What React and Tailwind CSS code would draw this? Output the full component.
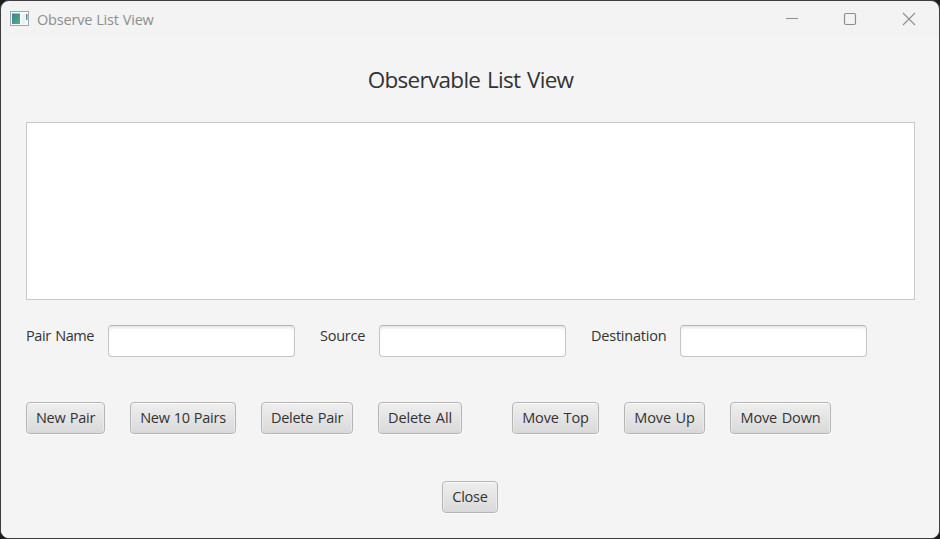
import React from "react";

function Field({ label, labelClass }) {
  return (
    <label className="flex">
      <span className={`${labelClass} whitespace-nowrap leading-[20px] pt-px`}>{label}</span>
      <input
        className="h-8 w-[187px] rounded-[4px] border border-[#c6c6c6] border-t-[#b5b5b5] bg-white px-2 outline-none shadow-[inset_0_3px_3px_-1px_#e6e6e6]"
      />
    </label>
  );
}

function Button({ children, className }) {
  return (
    <button
      className={`${className} flex h-8 items-center justify-center whitespace-nowrap rounded-[4px] border border-[#b5b5b5] bg-linear-to-b from-[#efefef] to-[#d9d9d9] pb-px shadow-[inset_0_1px_0_#fafafa,inset_1px_0_0_#ebebeb,inset_-1px_0_0_#ebebeb,0_1px_0_#fafafa]`}
    >
      {children}
    </button>
  );
}

function TitleBar() {
  return (
    <header className="flex h-9 shrink-0 items-center justify-between text-[#8e8e8e]">
      <div className="flex items-center">
        <svg className="ml-[9px] mr-[7px]" width="20" height="16" viewBox="0 0 20 16">
          <defs>
            <linearGradient id="pane" x1="0" y1="0" x2="1" y2="1">
              <stop offset="0" stopColor="#3f78a4" />
              <stop offset="1" stopColor="#55b573" />
            </linearGradient>
          </defs>
          <rect x="0.5" y="0.5" width="18" height="14" fill="#fafafa" stroke="#a0a8ae" />
          <rect x="2" y="2.5" width="8" height="10.5" fill="url(#pane)" />
          <rect x="12" y="3" width="3" height="10" fill="#efefef" />
          <rect x="16" y="3" width="1.5" height="6" fill="url(#pane)" />
        </svg>
        <span className="pt-px text-[14.5px] leading-5 tracking-[-0.2px] [word-spacing:0.5px]">Observe List View</span>
      </div>
      <svg width="153" height="36" viewBox="0 0 153 36" fill="none" stroke="#8e8e8e">
        <path d="M0 17.5h12" />
        <rect x="58.5" y="12.5" width="11" height="11" rx="1.5" strokeWidth="1.2" />
        <path d="M117 12l12 12M129 12l-12 12" strokeWidth="1.1" />
      </svg>
    </header>
  );
}

export default function App() {
  return (
    <div className="h-[539px] w-[940px] overflow-hidden bg-[#1d1d1f] font-['Open_Sans','Noto_Sans',sans-serif] text-[14.5px] text-[#333333]">
      <main className="flex h-full w-full flex-col rounded-[9px] border border-[#3d3d3f] bg-[#f3f3f3]">
        <TitleBar />
        <section className="flex flex-1 flex-col rounded-b-lg bg-[#f4f4f4] px-[25px]">
          <h1 className="mt-[27px] h-8 pl-px text-center text-[22.5px] leading-8 tracking-[-0.7px] [word-spacing:1.5px]">Observable List View</h1>
          <div className="mt-[26px] h-[178px] w-[889px] border border-[#c8c8c8] bg-white" />
          <div className="mt-[25px] flex h-8 gap-[25px]">
            <Field label="Pair Name" labelClass="w-[82px] tracking-[-0.4px] [word-spacing:1px]" />
            <Field label="Source" labelClass="w-[59px] tracking-[-0.25px]" />
            <Field label="Destination" labelClass="w-[89px] tracking-[-0.22px]" />
          </div>
          <div className="mt-[45px] flex gap-[25px]">
            <Button className="w-[79px] tracking-[-0.28px] [word-spacing:1px]">New Pair</Button>
            <Button className="w-[106px] tracking-[-0.25px] [word-spacing:0.5px]">New 10 Pairs</Button>
            <Button className="w-[92px] tracking-[-0.25px] [word-spacing:1px]">Delete Pair</Button>
            <Button className="w-[84px] tracking-[-0.1px] [word-spacing:1px]">Delete All</Button>
            <Button className="w-[87px] ml-[25px] tracking-[-0.1px] [word-spacing:1px]">Move Top</Button>
            <Button className="w-[81px] tracking-[-0.15px] [word-spacing:1px]">Move Up</Button>
            <Button className="w-[101px] tracking-[-0.15px] [word-spacing:1px]">Move Down</Button>
          </div>
          <div className="mt-[47px] flex justify-center">
            <Button className="w-14 tracking-[-0.2px]">Close</Button>
          </div>
        </section>
      </main>
    </div>
  );
}
